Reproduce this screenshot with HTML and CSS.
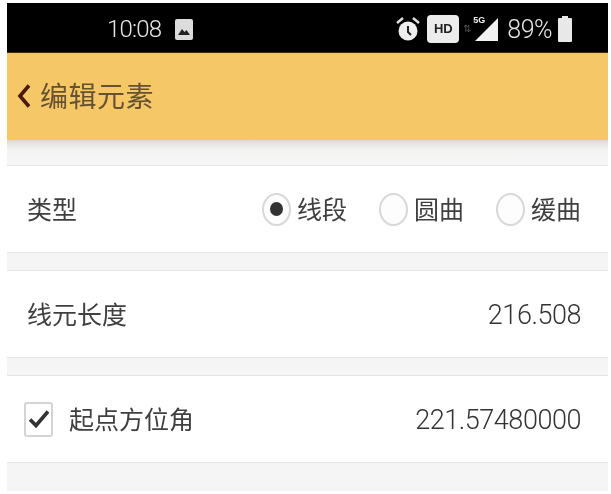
FILE: index.html
```html
<!DOCTYPE html>
<html lang="zh">
<head>
<meta charset="utf-8">
<title>编辑元素</title>
<link rel="stylesheet" href="styles.css">
</head>
<body>
<div class="screen">
  <div class="status">
    <div class="status-left">
      <span class="time">10:08</span>
      <svg class="pic" width="18" height="21" viewBox="0 0 18 21"><rect x="0" y="0" width="18" height="21" rx="2" fill="#dcdcdc"/><path d="M3 16l4-6 2.500 3 2-2 3.500 5z" fill="#222"/></svg>
    </div>
    <div class="status-right">
      <svg class="alarm" width="24" height="26" viewBox="0 0 24 26"><circle cx="12" cy="15" r="9.500" fill="#eee"/><path d="M12 10v6l3 3" fill="none" stroke="#222" stroke-width="2"/><path d="M1 7l6-5M23 7l-6-5" stroke="#ddd" stroke-width="2.500"/></svg>
      <span class="hd">HD</span>
      <span class="updown">⇅</span>
      <span class="net"><svg width="24" height="24" viewBox="0 0 24 24"><path d="M23 1v23H0z" fill="#f2f2f2"/></svg><span class="fiveg">5G</span></span>
      <span class="pct">89%</span>
      <svg class="batt" width="14" height="26" viewBox="0 0 14 26"><path d="M4 0h6v2h3a1 1 0 0 1 1 1v22a1 1 0 0 1-1 1H1a1 1 0 0 1-1-1V3a1 1 0 0 1 1-1h3z" fill="#e8e8e8"/></svg>
    </div>
  </div>
  <div class="header">
    <svg class="back" width="14" height="26" viewBox="0 0 14 26"><path d="M12 2.500L3 13l9 10.500" fill="none" stroke="#4a1a10" stroke-width="3.600"/></svg>
    <span class="title">编辑元素</span>
  </div>
  <div class="gap gap-top"></div>
  <div class="row">
    <span class="label">类型</span>
    <div class="radios">
      <span class="radio"><i class="dot on"></i><span class="radio-text">线段</span></span>
      <span class="radio"><i class="dot"></i><span class="radio-text">圆曲</span></span>
      <span class="radio"><i class="dot"></i><span class="radio-text">缓曲</span></span>
    </div>
  </div>
  <div class="gap"></div>
  <div class="row">
    <span class="label">线元长度</span>
    <span class="value">216.508</span>
  </div>
  <div class="gap"></div>
  <div class="row">
    <span class="check-wrap">
      <span class="check"><svg width="24" height="22" viewBox="0 0 24 22"><path d="M3 11.500l6 6 12-14" fill="none" stroke="#333" stroke-width="3.600"/></svg></span>
      <span class="label">起点方位角</span>
    </span>
    <span class="value">221.57480000</span>
  </div>
  <div class="gap gap-end"></div>
</div>
</body>
</html>
```
FILE: styles.css
```css
html, body { margin: 0; padding: 0; background: #fff; }
body { font-family: "Noto Sans CJK SC", "Roboto", sans-serif; overflow: hidden; }
.screen { width: 601px; margin: 3px 0 0 7px; display: flex; flex-direction: column; filter: blur(0.4px); }
.status { height: 50px; background: #000; display: flex; justify-content: space-between; align-items: center; color: #e6e6e6; box-sizing: border-box; padding: 3px 36px 0 100px; border-bottom: 1px solid #3a2c10; }
.status-left { display: flex; align-items: center; gap: 14px; }
.time { font: 300 24px/1 Roboto, sans-serif; letter-spacing: -0.8px; }
.status-right { display: flex; align-items: center; }
.alarm { margin-right: 7px; }
.hd { width: 32px; height: 28px; border-radius: 4px; background: #ececec; color: #222; font: 700 13px/28px "Liberation Sans", sans-serif; text-align: center; margin-right: 4px; }
.updown { font: 10px/1 "DejaVu Sans", sans-serif; color: #555; width: 12px; }
.net { position: relative; width: 24px; height: 24px; margin-right: 8px; }
.net svg { display: block; }
.fiveg { position: absolute; left: -2px; top: -1px; font: 700 9px/1 "Liberation Sans", sans-serif; color: #eee; }
.pct { font: 300 25px/1 Roboto, sans-serif; letter-spacing: -0.5px; margin-right: 6px; }
.header { height: 87px; background: #f5c767; display: flex; align-items: center; gap: 9px; padding-left: 10px; box-sizing: border-box; }
.back { flex: none; margin-top: -2px; }
.title { font-size: 28px; line-height: 1; letter-spacing: 0.5px; color: #665230; margin-top: -4px; }
.gap { height: 19px; background: #f5f5f5; border-top: 1px solid #e4e4e4; border-bottom: 1px solid #e4e4e4; box-sizing: border-box; }
.gap-top { height: 26px; border-top: 0; background: linear-gradient(#dcdad6, #f2f2f1 35%, #f6f6f6); }
.gap-end { height: 29px; border-bottom: 0; }
.row { height: 86px; background: #fff; display: flex; align-items: center; justify-content: space-between; padding: 0 27px 0 20px; box-sizing: border-box; color: #3f3f3f; }
.label { font-size: 25px; line-height: 1; margin-top: -2px; }
.value { font: 300 27px/1 Roboto, sans-serif; letter-spacing: -0.45px; margin-top: 2px; color: #333; }
.radios { display: flex; gap: 32px; }
.radio { display: flex; align-items: center; gap: 6px; font-size: 25px; line-height: 1; }
.radio-text { margin-top: -2px; }
.dot { width: 29px; height: 33px; border-radius: 50%; border: 2px solid #d8d8d8; box-sizing: border-box; display: flex; align-items: center; justify-content: center; background: #fdfdfd; }
.dot.on::after { content: ""; width: 13px; height: 14px; border-radius: 50%; background: #333; }
.check-wrap { display: flex; align-items: center; gap: 16px; margin-left: -3px; }
.check { width: 29px; height: 35px; border: 2px solid #d4d4d4; border-radius: 3px; box-sizing: border-box; display: flex; align-items: center; justify-content: center; }
```
